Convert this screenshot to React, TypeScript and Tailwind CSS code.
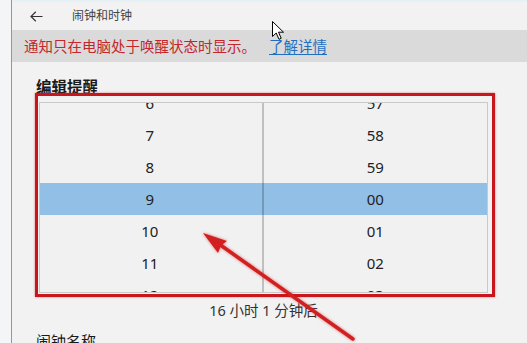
import React from "react";

const hours = ["6", "7", "8", "9", "10", "11", "12"];
const mins = ["57", "58", "59", "00", "01", "02", "03"];

export default function App() {
  const cjk = { fontFamily: '"Noto Sans", "Noto Sans CJK SC", sans-serif' };
  return (
    <div
      className="relative w-[527px] h-[343px] overflow-hidden flex bg-[#f2f2f2]"
      style={cjk}
    >
      {/* desktop strip at left */}
      <div className="w-[11px] h-full shrink-0 bg-[#f3f5f6] border-r border-[#7f9cb6] box-content" />

      {/* window */}
      <div className="flex-1 flex flex-col border-t-2 border-[#e6f1f7]">
        {/* header */}
        <div className="h-[28px] shrink-0 flex items-center">
          <svg
            className="ml-[18px]"
            width="13"
            height="11"
            viewBox="0 0 13 11"
            fill="none"
            stroke="#333"
            strokeWidth="1.2"
          >
            <path d="M12.5 5.5H1M5.8 0.8L1 5.5l4.8 4.7" />
          </svg>
          <span className="ml-[29px] text-[12px] text-[#444] leading-none">
            闹钟和时钟
          </span>
        </div>

        {/* notice band */}
        <div className="h-[32px] shrink-0 bg-[#dadada] flex items-center pl-[12px] text-[14.5px] leading-none">
          <span className="text-[#c4262b]">通知只在电脑处于唤醒状态时显示。</span>
          <span className="ml-[13px] text-[#1e6fc2] underline underline-offset-2">
            了解详情
          </span>
        </div>

        {/* content */}
        <div className="pl-[24px] shrink-0 flex flex-col">
          <div className="mt-[14px] shrink-0 text-[15.5px] leading-[22px] font-bold text-[#1a1a1a]">
            编辑提醒
          </div>

          {/* picker */}
          <div className="mt-[4px] ml-[3px] shrink-0 w-[449px] h-[191px] border border-[#c9c9c9] bg-[#f1f1f1] overflow-hidden">
            <div className="-mt-[16px] flex flex-col">
              {hours.map((h, i) => (
                <div
                  key={h}
                  className={
                    i === 3
                      ? "h-[32px] shrink-0 grid grid-cols-2 bg-[#92bfe6]"
                      : "h-[32px] shrink-0 grid grid-cols-2"
                  }
                >
                  <div className="flex items-center justify-center border-r-2 border-[#00000033] text-[15px] text-[#222]">
                    <span className="-ml-[2px]">{h}</span>
                  </div>
                  <div className="flex items-center justify-center text-[15px] text-[#222]">
                    {mins[i]}
                  </div>
                </div>
              ))}
            </div>
          </div>

          <div className="mt-[7px] ml-[3px] shrink-0 w-[449px] text-center text-[14.5px] leading-[20px] text-[#333]">
            16 小时 1 分钟后
          </div>

          <div className="mt-[11px] shrink-0 text-[15px] leading-[20px] text-[#1a1a1a]">
            闹钟名称
          </div>
        </div>
      </div>

      {/* red annotation box */}
      <div className="absolute left-[35px] top-[93px] w-[460px] h-[204px] border-[3px] border-[#c8161e] shadow-[0_0_2px_rgba(220,40,40,0.6)] pointer-events-none" />

      {/* red arrow */}
      <svg
        className="absolute left-0 top-0 pointer-events-none"
        width="527"
        height="343"
        viewBox="0 0 527 343"
        style={{ filter: "drop-shadow(0 0 1.5px rgba(200,30,30,0.6))" }}
      >
        <line
          x1="353"
          y1="339"
          x2="219"
          y2="244"
          stroke="#d21f1f"
          strokeWidth="3.5"
          strokeLinecap="round"
        />
        <polygon
          points="203,233 227,241 221,245.5 218,253"
          fill="#d21f1f"
        />
      </svg>

      {/* mouse cursor */}
      <svg
        className="absolute left-[272px] top-[21px] pointer-events-none"
        width="13"
        height="20"
        viewBox="0 0 13 20"
      >
        <path
          d="M0.5 0.5V15.5L4.2 12L7 18.3L9.2 17.3L6.5 11.2H11.5Z"
          fill="#fff"
          stroke="#000"
          strokeWidth="1"
          strokeLinejoin="round"
        />
      </svg>
    </div>
  );
}
